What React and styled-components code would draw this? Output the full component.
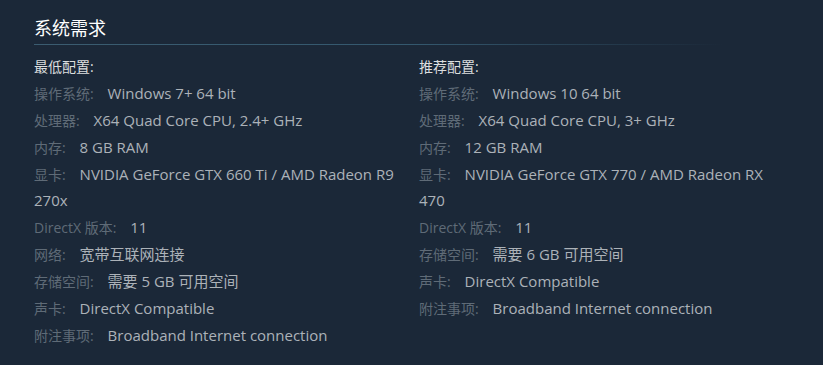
import React from 'react';
import styled, { createGlobalStyle } from 'styled-components';

const minimum = [
  ['操作系统:', 'Windows 7+ 64 bit'],
  ['处理器:', 'X64 Quad Core CPU, 2.4+ GHz'],
  ['内存:', '8 GB RAM'],
  ['显卡:', 'NVIDIA GeForce GTX 660 Ti / AMD Radeon R9 270x'],
  ['DirectX 版本:', '11'],
  ['网络:', '宽带互联网连接'],
  ['存储空间:', '需要 5 GB 可用空间'],
  ['声卡:', 'DirectX Compatible'],
  ['附注事项:', 'Broadband Internet connection'],
];

const recommended = [
  ['操作系统:', 'Windows 10 64 bit'],
  ['处理器:', 'X64 Quad Core CPU, 3+ GHz'],
  ['内存:', '12 GB RAM'],
  ['显卡:', 'NVIDIA GeForce GTX 770 / AMD Radeon RX 470'],
  ['DirectX 版本:', '11'],
  ['存储空间:', '需要 6 GB 可用空间'],
  ['声卡:', 'DirectX Compatible'],
  ['附注事项:', 'Broadband Internet connection'],
];

function ReqColumn({ title, items }) {
  return (
    <Column>
      <ColumnTitle>{title}</ColumnTitle>
      <List>
        {items.map(([label, value]) => (
          <Item key={label}>
            <Label>{label}</Label> {value}
          </Item>
        ))}
      </List>
    </Column>
  );
}

function App() {
  return (
    <>
      <GlobalStyle />
      <Section>
        <Heading>系统需求</Heading>
        <Columns>
          <ReqColumn title="最低配置:" items={minimum} />
          <ReqColumn title="推荐配置:" items={recommended} />
        </Columns>
      </Section>
    </>
  );
}

const GlobalStyle = createGlobalStyle`
  html, body {
    margin: 0;
    background: #1b2838;
  }
  body {
    font-family: "Open Sans", "Noto Sans CJK SC", sans-serif;
  }
`;

const Section = styled.div`
  padding: 14px 34px 0;
  width: 760px;
  min-height: 351px;
`;

const Heading = styled.h2`
  margin: 0;
  font-size: 18px;
  font-weight: normal;
  line-height: 28px;
  color: #ffffff;
  &::after {
    content: '';
    display: block;
    margin-top: 2px;
    height: 1px;
    width: 690px;
    background: linear-gradient(to right, #3b5c70 0%, #34586e 55%, rgba(52, 88, 110, 0) 100%);
  }
`;

const Columns = styled.div`
  display: grid;
  grid-template-columns: 365px 365px;
  column-gap: 20px;
  margin-top: 9px;
`;

const Column = styled.div`
  font-size: 15px;
`;

const ColumnTitle = styled.div`
  font-size: 14px;
  line-height: 26px;
  color: #dcdedf;
`;

const List = styled.ul`
  list-style: none;
  margin: 0;
  padding: 0;
`;

const Item = styled.li`
  line-height: 26px;
  margin-bottom: 1px;
  color: #acb2b8;
`;

const Label = styled.span`
  font-size: 14px;
  line-height: 18px;
  color: #5f6b77;
  margin-right: 10px;
`;

export default App;
